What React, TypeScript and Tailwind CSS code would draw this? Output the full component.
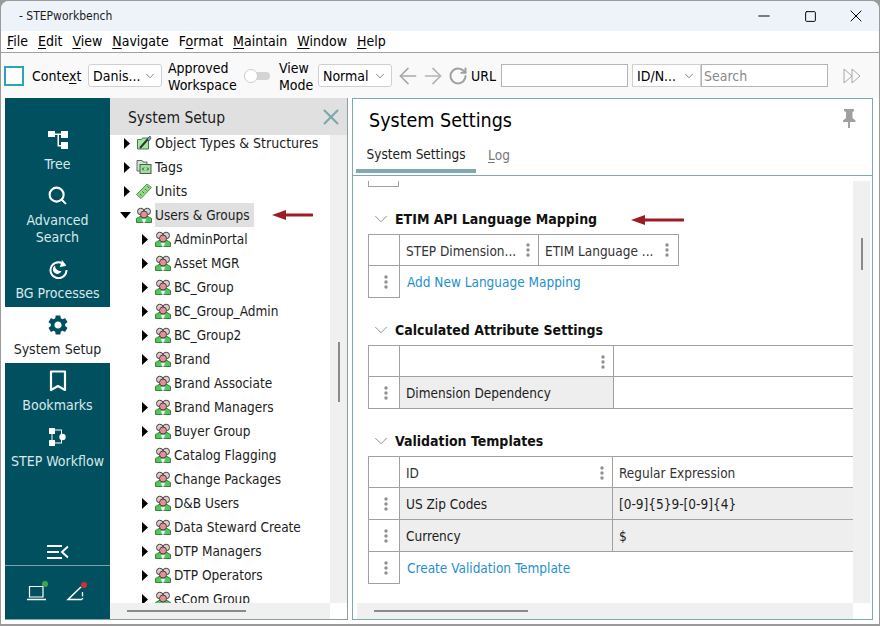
import { ChevronDown, ArrowLeft, ArrowRight, RotateCw, Minus, Square, X, Search } from 'lucide-react';
import { MdSettings } from 'react-icons/md';

const font = { fontFamily: '"DejaVu Sans Condensed", "DejaVu Sans", sans-serif', fontStretch: 'condensed' };

function Underlined({ text, at }: { text: string; at: number }) {
  return (
    <>
      {text.slice(0, at)}
      <span className="underline underline-offset-2">{text[at]}</span>
      {text.slice(at + 1)}
    </>
  );
}

function GroupIcon() {
  return (
    <svg width="16" height="16" viewBox="0 0 16 16" className="shrink-0">
      <path d="M0.500 15.500v-4l3.500-2h8l3.500 2v4z" fill="#4fc75a" stroke="#3c7f46" />
      <circle cx="4.800" cy="4.500" r="3.300" fill="#e9c6c6" stroke="#444" />
      <circle cx="11.200" cy="4.500" r="3.300" fill="#d9d0d0" stroke="#444" />
      <circle cx="8" cy="7.500" r="3.500" fill="#e88f94" stroke="#444" />
      <path d="M6 12h4l-1 3.500H7z" fill="#fff" />
    </svg>
  );
}

function WrenchIcon() {
  return (
    <svg width="16" height="16" viewBox="0 0 16 16" className="shrink-0">
      <path d="M1.500 4.500h4l1-1.500h6v11h-11z" fill="#a6e3a6" stroke="#3f7f4a" />
      <path d="M4 13 12 4" stroke="#333" strokeWidth="2" />
      <path d="M11 4l3-3 1 2-2 3z" fill="#5a9bd5" stroke="#333" strokeWidth="0.6" />
    </svg>
  );
}

function TagsIcon() {
  return (
    <svg width="16" height="16" viewBox="0 0 16 16" className="shrink-0">
      <path d="M1 1.500h5l1 1.500h4v9H1z" fill="#c9e9c9" stroke="#667" />
      <rect x="4" y="5.500" width="11" height="9" fill="#9fe09f" stroke="#555" />
      <path d="M8 8.500 6.500 10 8 11.500M11 8.500l1.500 1.500-1.500 1.500" fill="none" stroke="#333" />
    </svg>
  );
}

function RulerIcon() {
  return (
    <svg width="16" height="16" viewBox="0 0 16 16" className="shrink-0">
      <path d="M0.500 11.500 11 1l4.500 3.500L5 15.500z" fill="#8fdc7f" stroke="#5f8f63" />
      <path d="M4 11l1.500 1.500M6.500 8.500 8 10M9 6l1.500 1.500M11.500 3.500 13 5" stroke="#3d6f46" />
    </svg>
  );
}

function TreeNavIcon() {
  return (
    <svg width="20" height="20" viewBox="0 0 20 20" fill="#fff">
      <rect x="0" y="1" width="7" height="6" />
      <rect x="13" y="1" width="7" height="7" />
      <rect x="13" y="12" width="7" height="7" />
      <path d="M7 3.500h6v1.500H7zM9.500 4h1.500v11h2.500v1.500h-4z" />
    </svg>
  );
}

function BgIcon() {
  return (
    <svg width="20" height="20" viewBox="0 0 20 20" fill="none" stroke="#fff" strokeWidth="2">
      <path d="M17 6.500A8 8 0 1 0 18.500 11" />
      <path d="M14 1.500 17.500 6.500 12 7.500" fill="#fff" strokeWidth="1" />
      <path d="M7 6.500a4.500 4.500 0 1 0 6.500 5.500A5.500 5.500 0 0 1 7 6.500z" fill="#fff" strokeWidth="0" />
    </svg>
  );
}

function BookmarkIcon() {
  return (
    <svg width="18" height="22" viewBox="0 0 18 22" fill="none" stroke="#fff" strokeWidth="2.200">
      <path d="M2 1.500h14v18.500l-7-4-7 4z" strokeLinejoin="round" />
    </svg>
  );
}

function WorkflowIcon() {
  return (
    <svg width="20" height="20" viewBox="0 0 20 20" fill="#fff">
      <rect x="1" y="1" width="6" height="6" rx="0.500" />
      <rect x="1" y="13" width="6" height="6" rx="0.500" />
      <path d="M3.500 7v6h1V7zM7 3.500h6V7h1V2.500H7zM7 16.500h7V13h-1v2.500H7z" />
      <circle cx="14.500" cy="10" r="3.200" />
    </svg>
  );
}

function CollapseIcon() {
  return (
    <svg width="24" height="16" viewBox="0 0 24 16" fill="none" stroke="#fff" strokeWidth="2">
      <path d="M1 2h15M1 8h12M1 14h15M22 2.500 16 8l6 5.500" />
    </svg>
  );
}

function LaptopIcon() {
  return (
    <svg width="24" height="24" viewBox="0 0 24 24" fill="none">
      <path d="M3.500 7.500h13.500v10.500H3.500z" stroke="#fff" strokeWidth="1.200" />
      <path d="M1 20.500h19" stroke="#fff" strokeWidth="1.500" />
      <circle cx="19" cy="5" r="3" fill="#3fa64a" />
    </svg>
  );
}

function AlertIcon() {
  return (
    <svg width="24" height="24" viewBox="0 0 24 24" fill="none">
      <path d="M15 8 2 20.500h14" stroke="#fff" strokeWidth="1.500" />
      <path d="M16.500 13v4.500M16.500 19v1.500" stroke="#fff" strokeWidth="1.300" />
      <circle cx="18" cy="6" r="3" fill="#d23038" />
    </svg>
  );
}

function Arrow({ className, width }: { className: string; width: number }) {
  return (
    <svg width={width} height="10" viewBox={`0 0 ${width} 10`} className={`shrink-0 ${className}`}>
      <path d={`M0 5 14 0v3.500h${width - 15}a1.500 1.500 0 0 1 0 3H14V10z`} fill="#9b1c24" />
    </svg>
  );
}

function Dots() {
  return (
    <svg width="4" height="14" viewBox="0 0 4 14" fill="#8f8f8f" className="shrink-0">
      <circle cx="2" cy="2" r="1.700" />
      <circle cx="2" cy="7" r="1.700" />
      <circle cx="2" cy="12" r="1.700" />
    </svg>
  );
}

function Sel({ label, className }: { label: string; className: string }) {
  return (
    <div className={`flex h-[23px] shrink-0 items-center justify-between rounded-[3px] border border-[#d0d0d0] bg-white pl-1 pr-1 ${className}`}>
      <span className="pt-[1px]">{label}</span>
      <ChevronDown className="h-3.5 w-3.5 text-[#555]" strokeWidth={1.2} />
    </div>
  );
}

function NavItem({ icon, label, active }: { icon: React.ReactNode; label: string; active?: boolean }) {
  return (
    <div className={`flex flex-col items-center pt-[7px] pb-[5px] leading-[17px] ${active ? 'bg-white text-[#1d1d1d]' : 'text-[#d9e8eb]'}`}>
      <div className="flex h-[21px] items-center justify-center">{icon}</div>
      <div className="mt-[6px] whitespace-pre-line text-center">{label}</div>
    </div>
  );
}

const tree = [
  { label: 'AdminPortal', arrow: true },
  { label: 'Asset MGR', arrow: true },
  { label: 'BC_Group', arrow: true },
  { label: 'BC_Group_Admin', arrow: true },
  { label: 'BC_Group2', arrow: true },
  { label: 'Brand', arrow: true },
  { label: 'Brand Associate', arrow: false },
  { label: 'Brand Managers', arrow: true },
  { label: 'Buyer Group', arrow: true },
  { label: 'Catalog Flagging', arrow: false },
  { label: 'Change Packages', arrow: false },
  { label: 'D&B Users', arrow: true },
  { label: 'Data Steward Create', arrow: true },
  { label: 'DTP Managers', arrow: true },
  { label: 'DTP Operators', arrow: true },
  { label: 'eCom Group', arrow: true },
];

function Tri({ down }: { down?: boolean }) {
  return down ? (
    <svg width="11" height="7" viewBox="0 0 11 7" className="shrink-0"><path d="M0 0h11L5.500 6.500z" fill="#000" /></svg>
  ) : (
    <svg width="6" height="11" viewBox="0 0 6 11" className="shrink-0"><path d="M0 0l6 5.500L0 11z" fill="#000" /></svg>
  );
}

function TopRow({ icon, label }: { icon: React.ReactNode; label: string }) {
  return (
    <div className="flex h-6 items-center pl-[14px]">
      <div className="flex w-[12px] justify-start"><Tri /></div>
      {icon}
      <span className="ml-[3px]">{label}</span>
    </div>
  );
}

function Section({ title, arrow, children }: { title: string; arrow?: boolean; children: React.ReactNode }) {
  return (
    <div>
      <div className="flex h-[24px] items-center pl-[17px]">
        <ChevronDown className="h-[22px] w-[22px] text-[#888]" strokeWidth={1} />
        <span className="ml-[3px] font-bold text-[#111]">{title}</span>
        {arrow && <Arrow width={53} className="ml-[34px] mt-[2px]" />}
      </div>
      <div className="ml-[15px] mt-[3px] text-[13.500px]">{children}</div>
    </div>
  );
}

function Row({ cols, h, grip, shaded, plainLast, first = 'w-[214px]' }: { cols: React.ReactNode[]; h: string; grip?: boolean; shaded?: boolean; plainLast?: boolean; first?: string }) {
  return (
    <div className={`flex ${h}`}>
      <div className="flex w-[31px] shrink-0 items-center justify-center border-y border-l border-[#a0a0a0] pl-[3px]">{grip && <Dots />}</div>
      {cols.map((c, i) => (
        <div
          key={i}
          className={`flex items-center justify-between border-y border-l border-[#a0a0a0] pl-[6px] pr-[8px] pt-[2px] ${i === 0 ? `${first} shrink-0` : 'flex-1'} ${shaded && !(plainLast && i > 0) ? 'bg-[#eeeeee]' : ''}`}
        >
          {c}
        </div>
      ))}
    </div>
  );
}

export default function App() {
  return (
    <div className="flex h-[626px] w-[880px] flex-col overflow-hidden bg-[#9a9a9a] p-[1px] pb-[2px] text-[14px] text-[#1c1c1c]" style={font}>
      <div className="flex flex-1 flex-col overflow-hidden rounded-t-lg bg-[#f9f9f9]">
        <div className="flex h-[30px] shrink-0 items-center justify-between bg-[#eef3f9] pl-[18px] text-[12px]">
          <span>- STEPworkbench</span>
          <div className="flex items-center text-black">
            <div className="flex w-[46px] justify-center"><Minus className="h-[18px] w-[18px]" strokeWidth={1.3} /></div>
            <div className="flex w-[46px] justify-center"><Square className="h-[13px] w-[13px]" strokeWidth={1.8} /></div>
            <div className="flex w-[46px] justify-center"><X className="h-5 w-5" strokeWidth={1.2} /></div>
          </div>
        </div>
        <div className="flex h-[22px] shrink-0 items-center gap-[10px] border-b border-[#a0a0a0] bg-white pl-[6px] text-black">
          <span><Underlined text="File" at={0} /></span>
          <span><Underlined text="Edit" at={0} /></span>
          <span><Underlined text="View" at={0} /></span>
          <span><Underlined text="Navigate" at={0} /></span>
          <span><Underlined text="Format" at={1} /></span>
          <span><Underlined text="Maintain" at={0} /></span>
          <span><Underlined text="Window" at={0} /></span>
          <span><Underlined text="Help" at={0} /></span>
        </div>
        <div className="flex h-[45px] shrink-0 items-center pl-[3px] text-black">
          <div className="h-[20px] w-[20px] shrink-0 border-2 border-[#2ba4b8] bg-white" />
          <span className="ml-[8px] w-[50px] shrink-0 pt-[1px]"><Underlined text="Context" at={5} /></span>
          <Sel label="Danis..." className="ml-[6px] w-[74px]" />
          <div className="ml-[6px] w-[70px] shrink-0 pt-[2px] leading-[17px]">Approved Workspace</div>
          <div className="relative ml-[6px] h-[8px] w-[26px] shrink-0 rounded-full bg-[#d4d4d4]">
            <div className="absolute -top-[3px] left-0 h-[14px] w-[14px] rounded-full border border-[#ccc] bg-white" />
          </div>
          <div className="ml-[9px] w-[36px] shrink-0 pt-[2px] leading-[17px]">View Mode</div>
          <Sel label="Normal" className="ml-[3px] w-[74px]" />
          <ArrowLeft className="ml-[3px] h-[26px] w-[26px] shrink-0 text-[#a8a8a8]" strokeWidth={1.5} />
          <ArrowRight className="-ml-[1px] h-[26px] w-[26px] shrink-0 text-[#b4b4b4]" strokeWidth={1.5} />
          <RotateCw className="ml-[2px] h-[20px] w-[20px] shrink-0 text-[#a0a0a0]" strokeWidth={2.4} />
          <span className="ml-[3px] w-[26px] shrink-0 pt-[1px]">URL</span>
          <div className="ml-[4px] h-[23px] w-[127px] shrink-0 border border-[#b4b4b4] bg-white" />
          <Sel label="ID/N..." className="ml-[4px] w-[69px] !rounded-none" />
          <div className="flex h-[23px] w-[127px] shrink-0 items-center border border-[#b4b4b4] bg-white pl-[2px] pt-[1px] text-[#8a8a8a]">Search</div>
          <svg width="18" height="16" viewBox="0 0 18 16" fill="none" stroke="#a8a8a8" className="ml-[15px] shrink-0">
            <path d="M1 1l8 7-8 7zM9 1l8 7-8 7z" />
          </svg>
        </div>
        <div className="flex min-h-0 flex-1 bg-white pb-[4px] pl-[4px] pr-[6px]">
          <div className="flex w-[343px] shrink-0 overflow-hidden border-r border-b border-[#8a9ea3]">
            <div className="flex w-[105px] shrink-0 flex-col bg-[#00505f] pt-[24px]">
              <NavItem icon={<TreeNavIcon />} label="Tree" />
              <NavItem icon={<Search className="h-[21px] w-[21px] text-white" strokeWidth={2.4} />} label={'Advanced\nSearch'} />
              <NavItem icon={<BgIcon />} label="BG Processes" />
              <NavItem icon={<MdSettings className="h-[24px] w-[24px] text-[#00505f]" />} label="System Setup" active />
              <NavItem icon={<BookmarkIcon />} label="Bookmarks" />
              <NavItem icon={<WorkflowIcon />} label="STEP Workflow" />
              <div className="mt-auto flex justify-center pb-[5px]"><CollapseIcon /></div>
              <div className="flex h-[54px] items-start justify-center gap-[16px] border-t border-[#7fa2a9] pt-[13px]">
                <LaptopIcon />
                <AlertIcon />
              </div>
            </div>
            <div className="flex min-w-0 flex-1 flex-col">
              <div className="flex h-[37px] shrink-0 items-center justify-between bg-[#e0e0e0] pl-[18px] pr-[3px] pt-[1px] text-[15.500px]">
                <span className="pt-[4px]">System Setup</span>
                <X className="h-[26px] w-[26px] text-[#7fa6ad]" strokeWidth={1.9} />
              </div>
              <div className="flex min-h-0 flex-1">
                <div className="w-[220px] shrink-0 overflow-hidden bg-white">
                  <div className="-mt-[4px]">
                    <TopRow icon={<WrenchIcon />} label="Object Types & Structures" />
                    <TopRow icon={<TagsIcon />} label="Tags" />
                    <TopRow icon={<RulerIcon />} label="Units" />
                    <div className="flex h-6 items-center pl-[10px]">
                      <div className="w-[16px]"><Tri down /></div>
                      <GroupIcon />
                      <span className="ml-[3px] flex h-6 w-[99px] shrink-0 items-center whitespace-nowrap bg-[#e0e0e0] text-[13.500px]">Users &amp; Groups</span>
                      <Arrow width={41} className="ml-[18px] -mt-[1px]" />
                    </div>
                    <div className="text-[13.500px]">
                      {tree.map((t) => (
                        <div key={t.label} className="flex h-6 items-center pl-[32px]">
                          <div className="w-[13px]">{t.arrow && <Tri />}</div>
                          <GroupIcon />
                          <span className="ml-[3px]">{t.label}</span>
                        </div>
                      ))}
                    </div>
                  </div>
                </div>
                <div className="relative flex-1 bg-[#f0f0f0]">
                  <div className="absolute left-[8px] top-[207px] h-[60px] w-[2px] bg-[#8a8a8a]" />
                </div>
              </div>
              <div className="mr-[17px] flex h-[16px] shrink-0 items-center bg-[#f0f0f0] pl-[17px]">
                <div className="h-[2px] w-[119px] bg-[#8a8a8a]" />
              </div>
            </div>
          </div>
          <div className="ml-[4px] flex min-w-0 flex-1 flex-col overflow-hidden border border-[#7fa8b0]">
            <div className="flex h-[43px] shrink-0 items-center justify-between pl-[16px] pr-[16px] pt-[1px] text-[19.500px] text-black">
              <span>System Settings</span>
              <svg width="14" height="20" viewBox="0 0 14 20" fill="#a0a0a0" className="mb-[4px]">
                <path d="M2 0h10v2l-1.500 1v6l3 2.500V13H8v6H6v-6H1v-1.500l3-2.500V3L2 2z" />
              </svg>
            </div>
            <div className="flex h-[34px] shrink-0 border-b border-[#7fa8b0] pl-[3px] text-[13.500px]">
              <div className="flex h-[31px] w-[120px] items-center justify-center border-b-4 border-[#7fa8b0] pb-[2px]">System Settings</div>
              <div className="ml-[12px] flex h-[26px] items-center text-[#777]"><Underlined text="Log" at={0} /></div>
            </div>
            <div className="flex min-h-0 flex-1 flex-col pt-[5px]">
              <div className="flex min-h-0 flex-1">
                <div className="min-w-0 flex-1 overflow-hidden">
                  <div className="ml-[15px] flex h-[6px] w-[31px] border-x border-b border-[#a0a0a0]" />
                  <div className="mt-[20px]">
                    <Section title="ETIM API Language Mapping" arrow>
                      <div className="w-[311px]">
                        <div className="flex h-[32px]">
                          <div className="w-[31px] shrink-0 border-y border-l border-[#a0a0a0]" />
                          <div className="flex w-[139px] shrink-0 items-center justify-between border-y border-l border-[#a0a0a0] pl-[6px] pr-[8px] text-[#333]">
                            <span className="pt-[2px]">STEP Dimension...</span><Dots />
                          </div>
                          <div className="flex flex-1 items-center justify-between border border-[#a0a0a0] pl-[6px] pr-[9px] text-[#333]">
                            <span className="pt-[2px]">ETIM Language ...</span><Dots />
                          </div>
                        </div>
                        <div className="-mt-[1px] flex h-[33px]">
                          <div className="flex w-[32px] shrink-0 items-center justify-center border border-[#a0a0a0] pl-[3px]"><Dots /></div>
                          <span className="ml-[7px] flex items-center pt-[2px] text-[#1f8fd0]">Add New Language Mapping</span>
                        </div>
                      </div>
                    </Section>
                  </div>
                  <div className="mt-[20px]">
                    <Section title="Calculated Attribute Settings">
                      <Row h="h-[32px]" cols={[<><span /><Dots /></>, <span />]} />
                      <div className="-mt-[1px]">
                        <Row h="h-[33px]" grip shaded plainLast cols={[<span>Dimension Dependency</span>, <span />]} />
                      </div>
                    </Section>
                  </div>
                  <div className="mt-[20px]">
                    <Section title="Validation Templates">
                      <Row h="h-[32px]" first="w-[213px]" cols={[<><span className="text-[#333]">ID</span><Dots /></>, <span className="text-[#333]">Regular Expression</span>]} />
                      <div className="-mt-[1px]"><Row h="h-[33px]" first="w-[213px]" grip shaded cols={[<span>US Zip Codes</span>, <span>[0-9]{'{5}'}9-[0-9]{'{4}'}</span>]} /></div>
                      <div className="-mt-[1px]"><Row h="h-[33px]" first="w-[213px]" grip shaded cols={[<span>Currency</span>, <span>$</span>]} /></div>
                      <div className="-mt-[1px] flex h-[33px]">
                        <div className="flex w-[32px] shrink-0 items-center justify-center border border-[#a0a0a0] pl-[3px]"><Dots /></div>
                        <span className="ml-[7px] flex items-center pt-[2px] text-[#1f8fd0]">Create Validation Template</span>
                      </div>
                    </Section>
                  </div>
                </div>
                <div className="relative mr-[2px] w-[17px] shrink-0 bg-[#f0f0f0]">
                  <div className="absolute left-[8px] top-[57px] h-[32px] w-[2px] bg-[#8a8a8a]" />
                </div>
              </div>
              <div className="ml-[4px] mr-[19px] flex h-[16px] shrink-0 items-center bg-[#f0f0f0] pl-[17px]">
                <div className="h-[2px] w-[154px] bg-[#8a8a8a]" />
              </div>
            </div>
          </div>
        </div>
      </div>
    </div>
  );
}
